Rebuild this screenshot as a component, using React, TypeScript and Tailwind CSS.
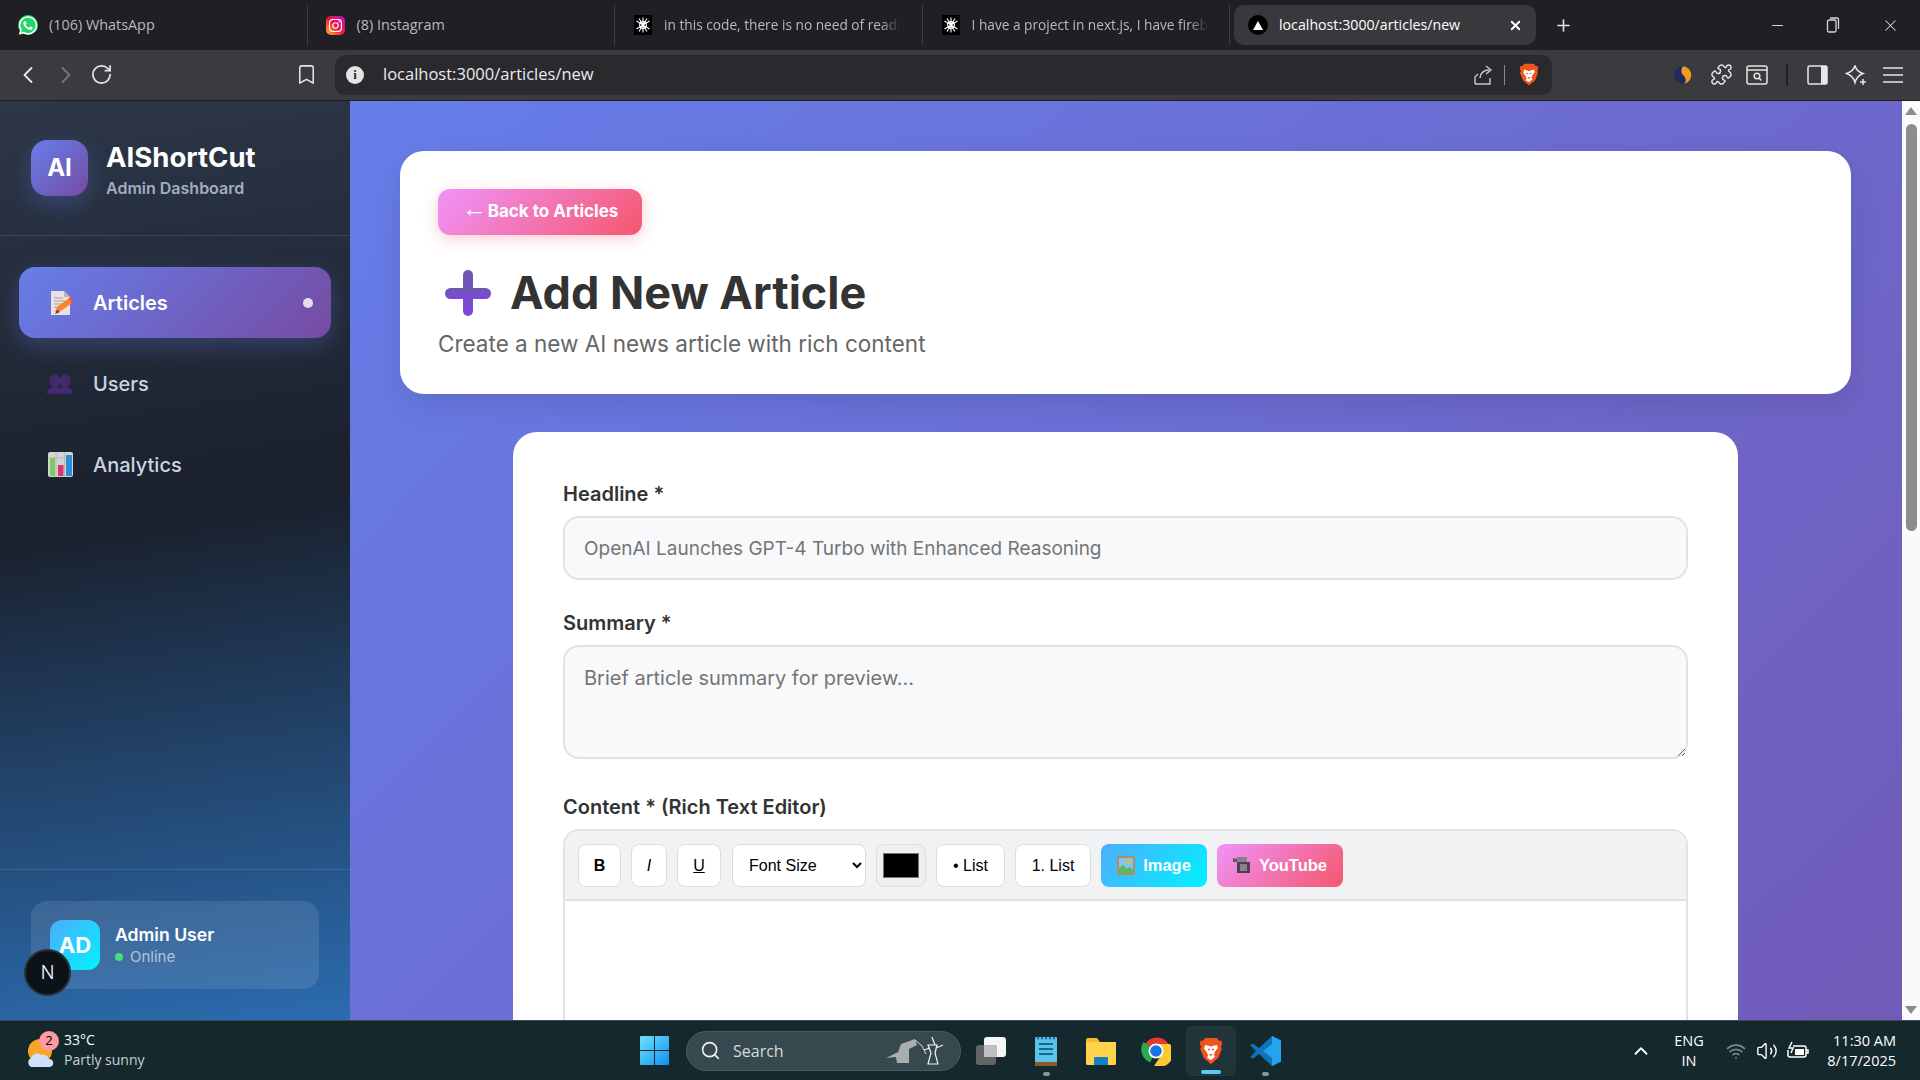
import { ChevronLeft, ChevronRight, ChevronUp, Minus, Plus, Puzzle, RotateCw, Bookmark, Search, Volume2, Wifi, X } from 'lucide-react';
import { FaInstagram, FaWhatsapp } from 'react-icons/fa';

const Gpt = () => (
    <svg width="18" height="20" viewBox="0 0 18 20" className="shrink-0">
        <rect width="18" height="20" fill="#000" />
        <g stroke="#fff" strokeWidth="1.1" fill="none">
            <circle cx="9" cy="10" r="3.4" />
            <path d="M9 2.5v15M2.5 6l13 8M15.5 6l-13 8M5 3.5l8 13M13 3.5l-8 13" />
        </g>
    </svg>
);

const Brave = ({ size = 20 }: { size?: number }) => (
    <svg width={size} height={size * 1.15} viewBox="0 0 24 28">
        <path d="M6 1h12l2 2.5 3 .5v4l-1 2 1 2-3.500 9-7.500 6.500L4.500 21 1 12l1-2-1-2V4l3-.5z" fill="#f1531e" />
        <path d="M6 8l4 1 2 1 2-1 4-1 1 3-3 4-1 3 1 2-4 3.500L8 21l1-2-1-3-3-4z" fill="#fff" />
        <path d="M9 12.500l2 .5M15 12.500l-2 .5M10.500 18h3" stroke="#f1531e" strokeWidth="1.500" />
    </svg>
);

const Tab = ({ icon, text, narrow }: { icon: React.ReactNode; text: string; narrow?: boolean }) => (
    <div className="flex h-[40px] w-[307.500px] shrink-0 items-center border-r border-[#3f3f44] pl-[18px]">
        <div className="flex w-[20px] justify-center">{icon}</div>
        <span className={narrow
            ? 'ml-[11px] whitespace-nowrap text-[13.700px] text-[#b9b9bc] [mask-image:linear-gradient(90deg,#000_92%,transparent)]'
            : 'ml-[11px] whitespace-nowrap text-[14.400px] text-[#b9b9bc]'}>{text}</span>
    </div>
);

const TabBar = () => (
    <div className="flex h-[50px] shrink-0 items-center bg-[#1f1f24] font-['Open_Sans',sans-serif]">
        <Tab icon={<span className="flex h-[20px] w-[20px] items-center justify-center rounded-full bg-[#25d366]"><FaWhatsapp size={21} color="#fff" /></span>} text="(106) WhatsApp" />
        <Tab icon={<span className="flex h-[19px] w-[19px] items-center justify-center rounded-[5px] bg-[linear-gradient(45deg,#fdbb2d,#f5133c_50%,#b515d8)]"><FaInstagram size={15} color="#fff" /></span>} text="(8) Instagram" />
        <Tab icon={<Gpt />} text="in this code, there is no need of readi" narrow />
        <Tab icon={<Gpt />} text="I have a project in next.js, I have fireb" narrow />
        <div className="ml-[4px] flex h-[40px] w-[302px] shrink-0 items-center rounded-[10px] bg-[#38383d] pl-[14px] pr-[13px]">
            <span className="flex h-[20px] w-[20px] items-center justify-center rounded-full bg-black">
                <span className="h-0 w-0 border-x-[5px] border-b-[9px] border-x-transparent border-b-white" />
            </span>
            <span className="ml-[11px] text-[14.200px] text-white">localhost:3000/articles/new</span>
            <X size={15} strokeWidth={3} color="#fff" className="ml-auto" />
        </div>
        <Plus size={19} color="#e6e6e6" className="ml-[18px]" />
        <div className="ml-auto flex items-center text-[#d8d8d8]">
            <Minus size={17} strokeWidth={1.500} />
            <svg width="14" height="16" viewBox="0 0 14 16" className="ml-[40px]" fill="none" stroke="#d8d8d8" strokeWidth="1.300"><rect x="1.500" y="3" width="8.500" height="12" rx="1.500" /><path d="M4 1h7a1.500 1.500 0 0 1 1.500 1.500V12" /></svg>
            <X size={19} strokeWidth={1.300} className="ml-[41px] mr-[20px]" />
        </div>
    </div>
);

const UrlBar = () => (
    <div className="flex h-[51px] shrink-0 items-center border-b border-[#1e1e22] bg-[#3a3a3f] pb-px font-['Open_Sans',sans-serif] text-[#e6e6e6]">
        <ChevronLeft size={28} strokeWidth={1.600} className="ml-[14px]" />
        <ChevronRight size={28} strokeWidth={1.600} color="#77777b" className="ml-[10px]" />
        <RotateCw size={23} strokeWidth={1.800} className="ml-[10px]" />
        <Bookmark size={23} strokeWidth={1.600} className="ml-[182px]" />
        <div className="ml-[17px] flex h-[40px] w-[1217px] items-center rounded-[10px] bg-[#29292e] pl-[11px]">
            <span className="flex h-[18px] w-[18px] items-center justify-center rounded-full bg-[#e4e4e4] font-['Liberation_Serif',serif] text-[13px] font-bold leading-none text-[#29292e]">i</span>
            <span className="ml-[19px] text-[16.500px] text-[#ececec]">localhost:3000/articles/new</span>
            <div className="ml-auto flex items-center pr-[13px]">
                <svg width="22" height="22" viewBox="0 0 22 22" fill="none" stroke="#c8c8c8" strokeWidth="1.400"><path d="M2 20h15V14M2 20v-7l3-3M7 14c0-5 4-8 9-8M13 2l5 4-5 4" /></svg>
                <span className="ml-[9px] mr-[14px] h-[20px] w-px bg-[#8a8a8e]" />
                <Brave />
            </div>
        </div>
        <svg width="20" height="22" viewBox="0 0 18 20" className="ml-[121px]"><circle cx="9" cy="10" r="8" fill="#1e2c5e" /><path d="M9 2c6 1 9 6 7 11-1 3-3 4-6 5 3-3 1-6-1-8S7 5 9 2z" fill="#f39a1c" /></svg>
        <Puzzle size={23} strokeWidth={1.500} className="ml-[17px]" />
        <svg width="22" height="20" viewBox="0 0 22 20" fill="none" stroke="#e6e6e6" strokeWidth="1.500" className="ml-[13px]"><rect x="1" y="1" width="20" height="18" rx="2" /><path d="M1 5h20" /><circle cx="11" cy="11" r="2.800" /><path d="M13 13l2.500 2.500" /></svg>
        <span className="ml-[18px] h-[22px] w-[2px] bg-[#222226]" />
        <svg width="21" height="20" viewBox="0 0 21 20" className="ml-[19px]"><rect x="1" y="1" width="19" height="18" rx="1.500" fill="none" stroke="#e6e6e6" strokeWidth="1.500" /><rect x="14" y="1" width="6" height="18" fill="#e6e6e6" /></svg>
        <svg width="22" height="22" viewBox="0 0 22 22" fill="none" stroke="#e6e6e6" strokeWidth="1.500" className="ml-[17px]"><path d="M10 1.500c1 4 3 6.500 8 8-4 1.500-6.500 3.500-8 9-1.500-5.500-4-7.500-8.500-9 4.500-1.500 7.500-4 8.500-8z" /><path d="M18 15v6M15 18h6" /></svg>
        <svg width="20" height="16" viewBox="0 0 20 16" stroke="#e6e6e6" strokeWidth="1.500" className="ml-[16px]"><path d="M0 1h20M0 8h20M0 15h20" /></svg>
    </div>
);

const ArticleEmoji = () => (
    <svg width="24" height="26" viewBox="0 0 24 26" className="ml-[4px] shrink-0">
        <path d="M1 1h13l6 6v18H1z" fill="#e9e2e0" />
        <path d="M14 1l6 6h-6z" fill="#bdb5b2" />
        <path d="M4 8h9M4 11h12M4 14h8M4 17h6" stroke="#a9a2a0" strokeWidth="1" />
        <path d="M5 22l2-5 11-8 4 4-11 8z" fill="#f9852f" />
        <path d="M18 9l2-2 3 3-1 3z" fill="#f0553e" />
        <path d="M5 24l2-4 3 2z" fill="#5b3a35" />
    </svg>
);

const UsersEmoji = () => (
    <svg width="26" height="20" viewBox="0 0 26 20" fill="#43296f">
        <ellipse cx="8" cy="7" rx="5.500" ry="6.500" />
        <ellipse cx="18" cy="7" rx="5.500" ry="6.500" />
        <path d="M0 20c0-5 3-7 8-7s8 2 8 7zM10 20c0-5 3-7 8-7s8 2 8 7z" />
    </svg>
);

const ChartEmoji = () => (
    <svg width="25" height="25" viewBox="0 0 25 25">
        <rect width="25" height="25" rx="2" fill="#d5d3d6" />
        <path d="M8 0v25M16.500 0v25M0 6h25" stroke="#b8b6ba" strokeWidth="1" />
        <rect x="2" y="6" width="5" height="18" fill="#7ecb5f" />
        <rect x="10" y="13" width="5.500" height="11" fill="#d9356f" />
        <rect x="18" y="3" width="6" height="21" fill="#2f8fd6" />
    </svg>
);

const NavItem = ({ icon, label, active }: { icon: React.ReactNode; label: string; active?: boolean }) => (
    <div className={active
        ? 'flex h-[71px] items-center rounded-[16px] bg-[linear-gradient(135deg,#667eea,#764ba2)] pl-[28px] pr-[18px] font-semibold text-white shadow-[0_8px_25px_rgba(102,126,234,0.3)]'
        : 'flex h-[71px] items-center pl-[28px] pr-[18px] font-medium text-[#cbd5e0]'}>
        <div className="flex w-[26px] justify-center">{icon}</div>
        <span className="ml-[20px] text-[20px]">{label}</span>
        {active && <span className="ml-auto h-[10px] w-[10px] rounded-full bg-white/80" />}
    </div>
);

const Sidebar = () => (
    <aside className="relative flex w-[350px] shrink-0 flex-col bg-[linear-gradient(172deg,#2d3748_0%,#1a202c_45%,#2b6cb0_100%)]">
        <div className="flex h-[135px] shrink-0 items-start border-b border-white/10 pl-[31px] pt-[39px]">
            <div className="flex h-[56px] w-[57px] items-center justify-center rounded-[16px] bg-[linear-gradient(135deg,#667eea,#764ba2)] text-[24px] font-bold text-white shadow-[0_8px_25px_rgba(102,126,234,0.3)]">AI</div>
            <div className="ml-[18px] mt-[-1px]">
                <div className="text-[27.500px] font-bold leading-[36px] text-white">AIShortCut</div>
                <div className="mt-[1px] text-[16px] font-semibold leading-[24px] text-[#a0aec0]">Admin Dashboard</div>
            </div>
        </div>
        <nav className="flex flex-col gap-[10px] px-[19px] pt-[31px]">
            <NavItem icon={<ArticleEmoji />} label="Articles" active />
            <NavItem icon={<UsersEmoji />} label="Users" />
            <NavItem icon={<ChartEmoji />} label="Analytics" />
        </nav>
        <div className="mt-auto border-t border-white/10 p-[31px]">
            <div className="flex h-[88px] items-center rounded-[16px] bg-white/10 pl-[19px]">
                <div className="flex h-[50px] w-[50px] items-center justify-center rounded-[12px] bg-[linear-gradient(135deg,#4facfe,#00f2fe)] text-[22px] font-bold text-white">AD</div>
                <div className="ml-[15px]">
                    <div className="text-[17.600px] font-semibold leading-[24px] text-white">Admin User</div>
                    <div className="flex items-center text-[15px] leading-[20px] text-[#b7c4d6]">
                        <span className="mr-[7px] h-[8px] w-[8px] rounded-full bg-[#4ade80]" />
                        Online
                    </div>
                </div>
            </div>
        </div>
        <div className="absolute bottom-[24px] left-[24px] flex h-[47px] w-[47px] items-center justify-center rounded-full border-2 border-[#2b2f36] bg-[#0b1218] text-[18px] font-light text-white">N</div>
    </aside>
);

const Button = ({ children, className }: { children: React.ReactNode; className?: string }) => (
    <button className={`flex h-[43px] items-center justify-center rounded-[8px] border border-[#dddddd] bg-white font-['Liberation_Sans',sans-serif] text-black ${className ?? ''}`}>{children}</button>
);

const FrameEmoji = () => (
    <svg width="18" height="19" viewBox="0 0 18 19">
        <rect width="18" height="19" fill="#b98a5e" />
        <rect x="2" y="2" width="14" height="15" fill="#7fc6ee" />
        <circle cx="11" cy="6" r="2" fill="#f7b733" />
        <path d="M2 17v-5l4-3 4 4 3-2 3 3v3z" fill="#5cb85c" />
    </svg>
);

const CameraEmoji = () => (
    <svg width="18" height="17" viewBox="0 0 18 17">
        <path d="M0 1l4 1v3H0z" fill="#5f5668" />
        <rect x="4" y="0" width="10" height="5" fill="#8b8092" />
        <rect x="4" y="5" width="13" height="11" fill="#4a4252" />
        <rect x="7" y="7" width="7" height="7" fill="#8b8092" />
    </svg>
);

const Editor = () => (
    <div className="overflow-hidden rounded-[16px] border-2 border-[#e2e2e4]">
        <div className="flex gap-[10px] border-b-2 border-[#e2e2e4] bg-[#f1f2f4] p-[13px] pb-[12px]">
            <Button className="w-[43px] text-[16px] font-bold">B</Button>
            <Button className="w-[36px] text-[16px] italic">I</Button>
            <Button className="w-[44px] text-[16px] underline">U</Button>
            <select className="ml-[1px] h-[43px] w-[134px] rounded-[8px] border border-[#dddddd] bg-white pl-[12px] font-['Liberation_Sans',sans-serif] text-[16px] text-black">
                <option>Font Size</option>
            </select>
            <input type="color" defaultValue="#000000" className="h-[43px] w-[50px] rounded-[8px] border border-[#dddddd] bg-[#efefef] p-[4px]" />
            <Button className="w-[69px] text-[16px]">• List</Button>
            <Button className="w-[76px] text-[16px]">1. List</Button>
            <Button className="w-[106px] gap-[8px] border-0 bg-[linear-gradient(135deg,#4facfe,#00f2fe)] text-[16.500px] font-bold text-white"><FrameEmoji />Image</Button>
            <Button className="w-[126px] gap-[8px] border-0 bg-[linear-gradient(135deg,#f093fb,#f5576c)] text-[16.500px] font-bold text-white"><CameraEmoji />YouTube</Button>
        </div>
        <div className="h-[300px] bg-white" />
    </div>
);

const Content = () => (
    <main className="min-w-0 flex-1 overflow-hidden font-['Inter',sans-serif]">
        {/* the page behind is much longer than the window, so the gradient runs over the full scroll height */}
        <div className="h-[2000px] bg-[linear-gradient(135deg,#667eea,#764ba2)] pl-[50px] pr-[51px] pt-[50px]">
            <section className="h-[243px] rounded-[24px] bg-white px-[38px] pt-[38px] shadow-[0_10px_30px_rgba(0,0,0,0.1)]">
                <a className="flex h-[46px] w-[204px] items-center justify-center rounded-[12px] bg-[linear-gradient(135deg,#f093fb,#f5576c)] pb-[1px] text-[17px] font-bold text-white shadow-[0_4px_15px_rgba(245,87,108,0.3)]"><span className="mr-[1px] -translate-y-[3px] font-['Liberation_Sans',sans-serif] text-[25px] font-normal leading-none">←</span>Back to Articles</a>
                <div className="mt-[29px] flex items-center">
                    <svg width="46" height="46" viewBox="0 0 46 46" className="ml-[7px]">
                        <defs><linearGradient id="plus" x1="0" y1="0" x2="0" y2="1"><stop offset="0" stopColor="#6b5aa8" /><stop offset="1" stopColor="#7f46e0" /></linearGradient></defs>
                        <rect x="18" y="0" width="10" height="46" rx="5" fill="url(#plus)" />
                        <rect x="0" y="18" width="46" height="11" rx="5.500" fill="url(#plus)" />
                    </svg>
                    <h1 className="ml-[19px] text-[45px] font-bold leading-[58px] text-[#333333]">Add New Article</h1>
                </div>
                <p className="mt-[6px] text-[22.500px] leading-[32px] text-[#666666]">Create a new AI news article with rich content</p>
            </section>
            <section className="mx-auto mt-[38px] w-[1225px] rounded-t-[24px] bg-white px-[50px] pt-[50px]">
                <label className="mb-[10px] block text-[20px] font-semibold leading-[24px] text-[#333333]">Headline *</label>
                <input placeholder="OpenAI Launches GPT-4 Turbo with Enhanced Reasoning" className="mb-[31px] block h-[64px] w-full rounded-[16px] border-2 border-[#e2e2e4] bg-[#f8f9fa] px-[19px] text-[19px] placeholder:text-[#757575]" />
                <label className="mb-[10px] block text-[20px] font-semibold leading-[24px] text-[#333333]">Summary *</label>
                <textarea placeholder="Brief article summary for preview..." className="mb-[36px] block h-[114px] w-full rounded-[16px] border-2 border-[#e2e2e4] bg-[#f8f9fa] px-[19px] py-[16px] text-[20px] placeholder:text-[#757575]" />
                <label className="mb-[10px] block text-[20px] font-semibold leading-[24px] text-[#333333]">Content * (Rich Text Editor)</label>
                <Editor />
            </section>
        </div>
    </main>
);

const Scrollbar = () => (
    <div className="flex w-[18px] shrink-0 flex-col items-center bg-[#fafafa] pt-[6px]">
        <span className="h-0 w-0 border-x-[6px] border-b-[8px] border-x-transparent border-b-[#8c8c8c]" />
        <span className="mt-[9px] h-[407px] w-[11px] rounded-full bg-[#8c8c8c]" />
        <span className="mb-[6px] mt-auto h-0 w-0 border-x-[6px] border-t-[8px] border-x-transparent border-t-[#8c8c8c]" />
    </div>
);

const Taskbar = () => (
    <div className="relative flex h-[60px] shrink-0 items-center border-t border-[#3c4a50] bg-[#14282e] font-['Open_Sans',sans-serif] text-white">
        <div className="relative ml-[28px] h-[36px] w-[28px]">
            <svg width="28" height="32" viewBox="0 0 28 32" className="mt-[4px]">
                <circle cx="12" cy="14" r="12" fill="#f6a623" />
                <path d="M3 30a5 5 0 0 1 0-9c1-4 7-6 10-3 4-1 7 1 8 4 5 0 6 7 1 8z" fill="#cfe0f7" />
            </svg>
            <span className="absolute left-[11px] top-[-2px] flex h-[20px] w-[20px] items-center justify-center rounded-full bg-[#ff99a4] text-[13px] text-black">2</span>
        </div>
        <div className="ml-[8px] mt-[-1px] w-[576px] text-[14px] leading-[20px]">
            <div>33°C</div>
            <div className="text-[#c9d0d2]">Partly sunny</div>
        </div>
        <svg width="29" height="29" viewBox="0 0 29 29">
            <defs><linearGradient id="win" x1="0" y1="0" x2="1" y2="1"><stop offset="0" stopColor="#6ee2fb" /><stop offset="1" stopColor="#1291ef" /></linearGradient></defs>
            <path d="M0 1a1 1 0 0 1 1-1h13v14H0zM15 0h13a1 1 0 0 1 1 1v13H15zM0 15h14v14H1a1 1 0 0 1-1-1zM15 15h14v13a1 1 0 0 1-1 1H15z" fill="url(#win)" />
        </svg>
        <div className="ml-[17px] flex h-[40px] w-[275px] items-center rounded-full border border-[#4a5c62] bg-[#36494f] pl-[13px]">
            <Search size={21} strokeWidth={1.800} color="#f0f0f0" />
            <span className="ml-[12px] text-[16px] text-[#d6dbdc]">Search</span>
            <svg width="58" height="30" viewBox="0 0 58 30" className="ml-[102px]">
                <path d="M0 22l12-6 3-8 14-5 2 6-8 4v14H11l-1-6z" fill="#a8adae" />
                <path d="M29 4l7 6 4 8" stroke="#dcdcdc" fill="none" />
                <path d="M46 1l3 8M42 9h9l-2 8 3 11h-10l3-11zM38 14l6-2M50 12l7-3" stroke="#f2f2f2" strokeWidth="1.200" fill="none" />
            </svg>
        </div>
        <div className="relative ml-[15px] h-[28px] w-[30px]">
            <span className="absolute bottom-0 left-0 h-[20px] w-[20px] rounded-[3px] bg-[#616567]" />
            <span className="absolute right-0 top-0 h-[20px] w-[22px] rounded-[3px] bg-[#f6f6f6]" />
            <span className="absolute left-[8px] top-[8px] h-[12px] w-[13px] bg-[#bdbfc0]" />
        </div>
        <div className="relative ml-[29px] flex w-[22px] justify-center">
            <svg width="22" height="30" viewBox="0 0 22 30">
                <rect y="1" width="22" height="26" rx="1" fill="#58c4e6" />
                <rect y="26" width="22" height="4" fill="#8a5a2c" />
                <path d="M4 8h14M4 13h14M4 18h14" stroke="#156a94" strokeWidth="2.200" />
                <path d="M2 2h18" stroke="#176d96" strokeWidth="2.500" strokeDasharray="2 2" />
            </svg>
            <span className="absolute bottom-[-10px] h-[4px] w-[7px] rounded-full bg-[#8c9699]" />
        </div>
        <svg width="30" height="28" viewBox="0 0 30 28" className="ml-[29px]">
            <path d="M0 3a2 2 0 0 1 2-2h9l3 4h16v21a2 2 0 0 1-2 2H2a2 2 0 0 1-2-2z" fill="#f5b92a" />
            <path d="M0 5h30v21a2 2 0 0 1-2 2H2a2 2 0 0 1-2-2z" fill="#ffd34e" />
            <rect x="8" y="20" width="14" height="8" rx="1" fill="#1580c8" />
        </svg>
        <svg width="30" height="30" viewBox="0 0 30 30" className="ml-[25px]">
            <path d="M15 15L4 8.500A13.500 13.500 0 0 1 28 9H15z" fill="#e33b2e" />
            <path d="M15 15L9 26.500A14 14 0 0 1 2.500 6z" fill="#2da94f" />
            <path d="M15 8h14a14 14 0 0 1-16 22l8-12z" fill="#fcc934" />
            <circle cx="15" cy="15" r="7.500" fill="#fff" />
            <circle cx="15" cy="15" r="5.800" fill="#1a73e8" />
        </svg>
        <div className="relative ml-[15px] flex h-[50px] w-[50px] items-center justify-center rounded-[5px] border border-[#26383e] bg-[#21343a]">
            <Brave size={24} />
            <span className="absolute bottom-[1px] h-[4px] w-[20px] rounded-full bg-[#5ccbf5]" />
        </div>
        <div className="relative ml-[14px] flex w-[31px] justify-center">
            <svg width="31" height="30" viewBox="0 0 31 30">
                <path d="M22 0l9 4.500v21L22 30 9 18l-6 4.500L0 21l6-6-6-6 3-1.500L9 12z" fill="#0f72bb" />
                <path d="M22 0l9 4.500v21L22 30zM22 8l-9 7 9 7z" fill="#25a4ed" />
            </svg>
            <span className="absolute bottom-[-10px] h-[4px] w-[7px] rounded-full bg-[#8c9699]" />
        </div>
        <ChevronUp size={22} strokeWidth={2} className="ml-[349px]" />
        <div className="ml-[15px] w-[44px] text-center text-[14.500px] leading-[20px]">
            <div>ENG</div>
            <div>IN</div>
        </div>
        <Wifi size={20} color="#7d8a8e" className="ml-[15px]" />
        <Volume2 size={22} className="ml-[10px]" strokeWidth={1.500} />
        <svg width="22" height="20" viewBox="0 0 22 20" fill="none" stroke="#fff" strokeWidth="1.500" className="ml-[9px]">
            <path d="M6 5h11a2 2 0 0 1 2 2v7a2 2 0 0 1-2 2H3a2 2 0 0 1-2-2V9" />
            <path d="M19 9h2v3h-2" />
            <path d="M5 1L2 7h4l-2 5" />
            <rect x="8" y="8" width="9" height="6" fill="#fff" stroke="none" />
        </svg>
        <div className="ml-auto mr-[24px] text-right text-[14.500px] leading-[20px]">
            <div>11:30 AM</div>
            <div>8/17/2025</div>
        </div>
    </div>
);

export default function App() {
    return (
        <div className="flex h-screen flex-col overflow-hidden font-['Inter',sans-serif]">
            <TabBar />
            <UrlBar />
            <div className="flex min-h-0 flex-1">
                <Sidebar />
                <Content />
                <Scrollbar />
            </div>
            <Taskbar />
        </div>
    );
}
